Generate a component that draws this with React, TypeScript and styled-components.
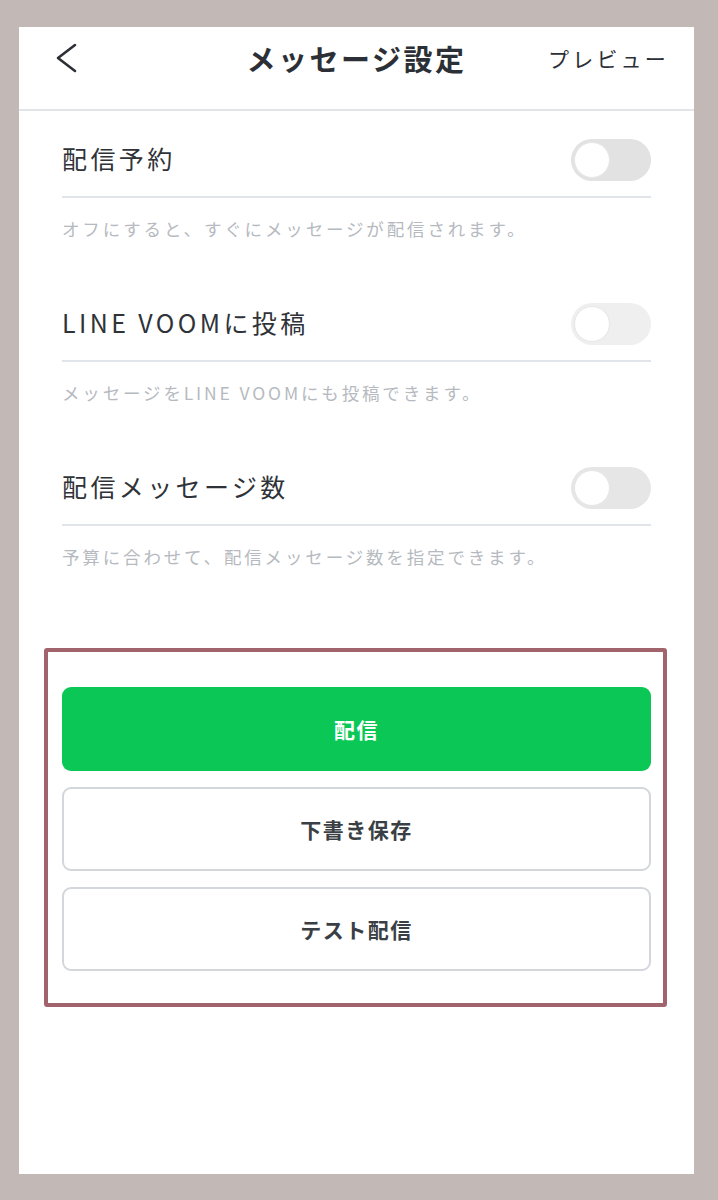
import React from "react";
import styled, { createGlobalStyle } from "styled-components";

const GlobalStyle = createGlobalStyle`
  html, body {
    margin: 0;
    padding: 0;
    background: #c2b8b6;
  }
  body {
    font-family: "Noto Sans CJK JP", "Noto Sans", sans-serif;
  }
`;

const Page = styled.div`
  padding: 27px 24px 26px 19px;
`;

const Panel = styled.div`
  background: #ffffff;
  height: 1147px;
  display: flex;
  flex-direction: column;
`;

const Header = styled.header`
  height: 84px;
  box-sizing: border-box;
  padding: 11px 28px 0 36px;
  display: grid;
  grid-template-columns: 1fr auto 1fr;
  align-items: start;
  border-bottom: 2px solid #e1e4e8;
`;

const BackButton = styled.button`
  border: none;
  background: none;
  padding: 0;
  width: 40px;
  height: 40px;
  display: flex;
  align-items: center;
  justify-content: flex-start;
  cursor: pointer;
`;

const Title = styled.h1`
  margin: 0;
  text-align: center;
  font-size: 29px;
  line-height: 40px;
  font-weight: 700;
  letter-spacing: 2.5px;
  color: #2c3036;
  padding-right: 8px;
`;

const Preview = styled.span`
  justify-self: end;
  font-size: 21px;
  line-height: 40px;
  letter-spacing: 3.2px;
  margin-right: -3px;
  color: #2c3036;
`;

const Settings = styled.div`
  padding: 9px 43px 0;
`;

const Section = styled.section`
  margin-bottom: 43px;
`;

const SettingRow = styled.div`
  height: 76px;
  display: flex;
  align-items: center;
  justify-content: space-between;
  border-bottom: 2px solid #e1e4e8;
`;

const Label = styled.span`
  font-size: 25px;
  letter-spacing: 3.4px;
  color: #2f3338;
`;

const Toggle = styled.div<{ $track: string }>`
  width: 80px;
  height: 42px;
  margin-top: 4px;
  border-radius: 21px;
  background: ${(p) => p.$track};
  position: relative;
  flex-shrink: 0;

  &::after {
    content: "";
    position: absolute;
    left: 3px;
    top: 3px;
    width: 34px;
    height: 34px;
    border-radius: 50%;
    background: #ffffff;
    border: 1px solid #e6e6e6;
  }
`;

const Help = styled.p`
  margin: 19px 0 0;
  font-size: 17.5px;
  line-height: 24px;
  letter-spacing: 2.85px;
  color: #b6bac0;
`;

const ActionBox = styled.div`
  margin: 36px 27px 0 25px;
  border: 4px solid #a2646c;
  border-radius: 3px;
  padding: 35px 12px 32px 14px;
  display: flex;
  flex-direction: column;
  gap: 16px;
`;

const ActionButton = styled.button<{ $primary?: boolean }>`
  height: 84px;
  border-radius: 9px;
  font-family: "Noto Sans CJK JP", "Noto Sans", sans-serif;
  font-size: 21px;
  font-weight: 700;
  letter-spacing: 1.5px;
  cursor: pointer;
  background: ${(p) => (p.$primary ? "#0bc755" : "#ffffff")};
  color: ${(p) => (p.$primary ? "#ffffff" : "#3a3f45")};
  border: ${(p) => (p.$primary ? "none" : "2px solid #d3d7dc")};
`;

const settings = [
  { label: "配信予約", help: "オフにすると、すぐにメッセージが配信されます。", track: "#e2e2e2" },
  { label: "LINE VOOMに投稿", help: "メッセージをLINE VOOMにも投稿できます。", track: "#efefef" },
  { label: "配信メッセージ数", help: "予算に合わせて、配信メッセージ数を指定できます。", track: "#e6e6e6" },
];

export default function App() {
  return (
    <Page>
      <GlobalStyle />
      <Panel>
        <Header>
          <BackButton aria-label="戻る">
            <svg width="22" height="30" viewBox="0 0 22 30" fill="none">
              <path d="M20 2 L3 15 L20 28" stroke="#2c3036" strokeWidth="2.6" strokeLinecap="round" strokeLinejoin="round" />
            </svg>
          </BackButton>
          <Title>メッセージ設定</Title>
          <Preview>プレビュー</Preview>
        </Header>
        <Settings>
          {settings.map((s) => (
            <Section key={s.label}>
              <SettingRow>
                <Label>{s.label}</Label>
                <Toggle $track={s.track} />
              </SettingRow>
              <Help>{s.help}</Help>
            </Section>
          ))}
        </Settings>
        <ActionBox>
          <ActionButton $primary>配信</ActionButton>
          <ActionButton>下書き保存</ActionButton>
          <ActionButton>テスト配信</ActionButton>
        </ActionBox>
      </Panel>
    </Page>
  );
}
